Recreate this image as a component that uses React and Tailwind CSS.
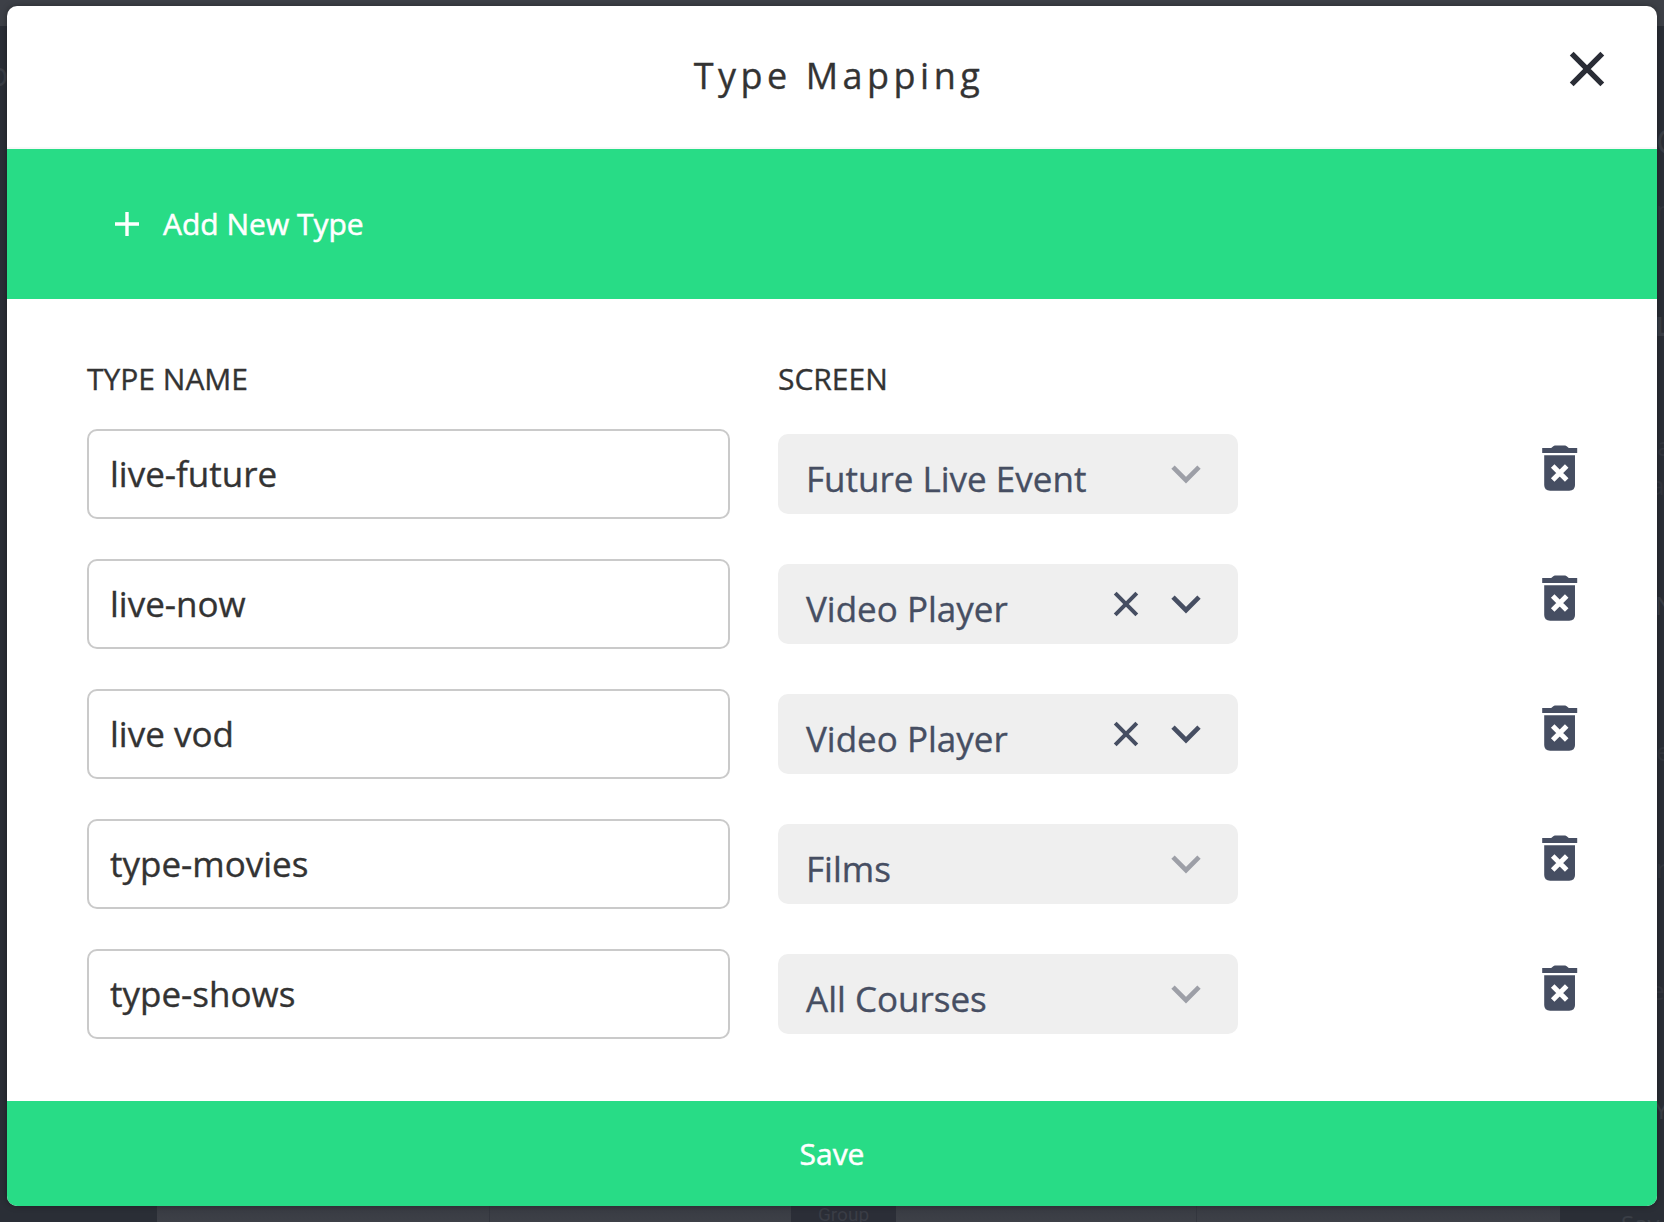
const rows = [
  { name: "live-future", screen: "Future Live Event", clearable: false },
  { name: "live-now", screen: "Video Player", clearable: true },
  { name: "live vod", screen: "Video Player", clearable: true },
  { name: "type-movies", screen: "Films", clearable: false },
  { name: "type-shows", screen: "All Courses", clearable: false },
];

function CloseIcon() {
  return (
    <svg width="36" height="36" viewBox="0 0 36 36" fill="none" stroke="#2a2d36" strokeWidth="5.4">
      <path d="M2.7 2.7 33.3 33.3M33.3 2.7 2.7 33.3" />
    </svg>
  );
}

function PlusIcon() {
  return (
    <svg width="24" height="24" viewBox="0 0 24 24" fill="none" stroke="white" strokeWidth="3.4">
      <path d="M12 0V24M0 12H24" />
    </svg>
  );
}

function ClearIcon() {
  return (
    <svg width="26" height="26" viewBox="0 0 26 26" fill="none" stroke="#464e62" strokeWidth="4">
      <path d="M2.2 2.2 23.8 23.8M23.8 2.2 2.2 23.8" />
    </svg>
  );
}

function ChevronIcon({ muted }) {
  return (
    <svg width="30" height="20" viewBox="0 0 30 20" fill="none" stroke={muted ? "#9d9fa7" : "#464e62"} strokeWidth="4.7">
      <path d="M2 3.2 15 16.2 28 3.2" />
    </svg>
  );
}

function TrashIcon() {
  return (
    <svg width="36" height="47" viewBox="0 0 36 47">
      <path fill="#464e62" d="M9.2 3 11.3 1.2Q12 .5 13 .5H23Q24 .5 24.7 1.2L26.8 3H35.2V8H.2V3Z" />
      <path fill="#464e62" d="M2.2 10.3H33V40Q33 45.7 27.2 45.7H8.2Q2.2 45.7 2.2 40Z" />
      <path stroke="white" strokeWidth="5" d="M10.7 21 24.7 35M24.7 21 10.7 35" />
    </svg>
  );
}

function Backdrop() {
  return (
    <div aria-hidden="true" className="absolute inset-0 overflow-hidden bg-[#2a2e36] text-[#3a3e46]">
      <div className="h-[26px] bg-[#3d4047]" />
      <span className="absolute -left-[11px] top-[56px] text-[32px] leading-[36px]">o</span>
      <span className="absolute left-[1656px] top-[121px] text-[34px] leading-[40px]">C</span>
      <span className="absolute left-[1656px] top-[192px] text-[26px] leading-[36px] text-[#33363e]">n</span>
      <span className="absolute left-[1655px] top-[308px] text-[26px] font-bold leading-[36px]">L</span>
      <span className="absolute left-[1657px] top-[428px] text-[26px] leading-[36px] text-[#33363e]">a</span>
      <span className="absolute left-[1650px] top-[467px] text-[26px] leading-[36px] text-[#33363e]">a</span>
      <span className="absolute left-[1655px] top-[587px] text-[26px] leading-[36px]">N</span>
      <span className="absolute left-[1656px] top-[733px] text-[26px] leading-[36px] text-[#33363e]">e</span>
      <span className="absolute left-[1656px] top-[850px] text-[26px] leading-[36px] text-[#33363e]">r</span>
      <span className="absolute left-[1650px] top-[972px] text-[26px] leading-[36px] text-[#33363e]">e</span>
      <span className="absolute left-[1654px] top-[1091px] text-[26px] leading-[36px]">Y</span>
      <div className="absolute bottom-0 left-[157px] flex h-[22px] w-[1403px] bg-linear-to-b from-[#363941] to-[#3d4047]">
        <div className="w-[333px] border-r border-[#33363e]" />
        <div className="w-[301px]" />
        <div className="h-full w-[105px] overflow-hidden bg-[#2b2e37] text-center font-[Roboto] text-[19px] leading-[30px] text-[#3a3d46]">
          Group
        </div>
        <div className="w-[301px] border-r border-[#33363e]" />
      </div>
      <span className="absolute left-[1621px] top-[1208px] text-[24px] leading-[32px]">Sav</span>
    </div>
  );
}

function MappingRow({ row }) {
  return (
    <div className="flex h-[90px] items-center">
      <input
        defaultValue={row.name}
        className="h-[90px] w-[643px] rounded-[10px] border-2 border-[#cacaca] bg-white pb-[2px] pl-[21px] text-[35px] text-[#333333] outline-none [-webkit-text-stroke:0.35px_#333333]"
      />
      <div className="ml-12 flex h-20 w-[460px] items-center rounded-[10px] bg-[#efefef] pl-7 pr-[37px] text-[#464e62]">
        <span className="flex-1 pt-[9px] text-[35px] leading-[48px] [-webkit-text-stroke:0.35px_#464e62]">{row.screen}</span>
        <div className="flex items-center gap-8">
          {row.clearable && <ClearIcon />}
          <ChevronIcon muted={!row.clearable} />
        </div>
      </div>
      <button className="ml-auto mr-[79px] -mt-3">
        <TrashIcon />
      </button>
    </div>
  );
}

export default function App() {
  return (
    <div className="relative h-[1222px] w-[1664px] overflow-hidden px-[7px] pt-[6px] font-['Open_Sans',sans-serif]">
      <Backdrop />
      <div className="relative flex h-[1200px] w-[1650px] flex-col overflow-hidden rounded-[10px] bg-white shadow-[0_0_6px_rgba(0,0,0,0.35)]">
        <header className="relative flex h-[143px] items-center justify-center border-b-2 border-[#f8f8f8]">
          <h1 className="pb-px pl-[14px] text-[36px] leading-[48px] tracking-[4.5px] text-[#333333] [-webkit-text-stroke:0.35px_#333333]">Type Mapping</h1>
          <button className="absolute right-[52px] top-[45px]">
            <CloseIcon />
          </button>
        </header>
        <button className="flex h-[150px] items-center gap-6 bg-[#28dc86] pl-[108px] text-[30px] leading-[40px] text-white [-webkit-text-stroke:0.5px_white]">
          <PlusIcon />
          Add New Type
        </button>
        <div className="flex-1 pl-20 pt-[59px] text-[#333333]">
          <div className="flex h-[42px] text-[30px] leading-[42px] [-webkit-text-stroke:0.35px_#333333]">
            <span className="w-[691px]">TYPE NAME</span>
            <span>SCREEN</span>
          </div>
          <div className="mt-[29px] flex flex-col gap-10">
            {rows.map((row) => (
              <MappingRow key={row.name} row={row} />
            ))}
          </div>
        </div>
        <button className="h-[105px] bg-[#28dc86] text-[30px] leading-[40px] text-white [-webkit-text-stroke:0.5px_white]">Save</button>
      </div>
    </div>
  );
}
